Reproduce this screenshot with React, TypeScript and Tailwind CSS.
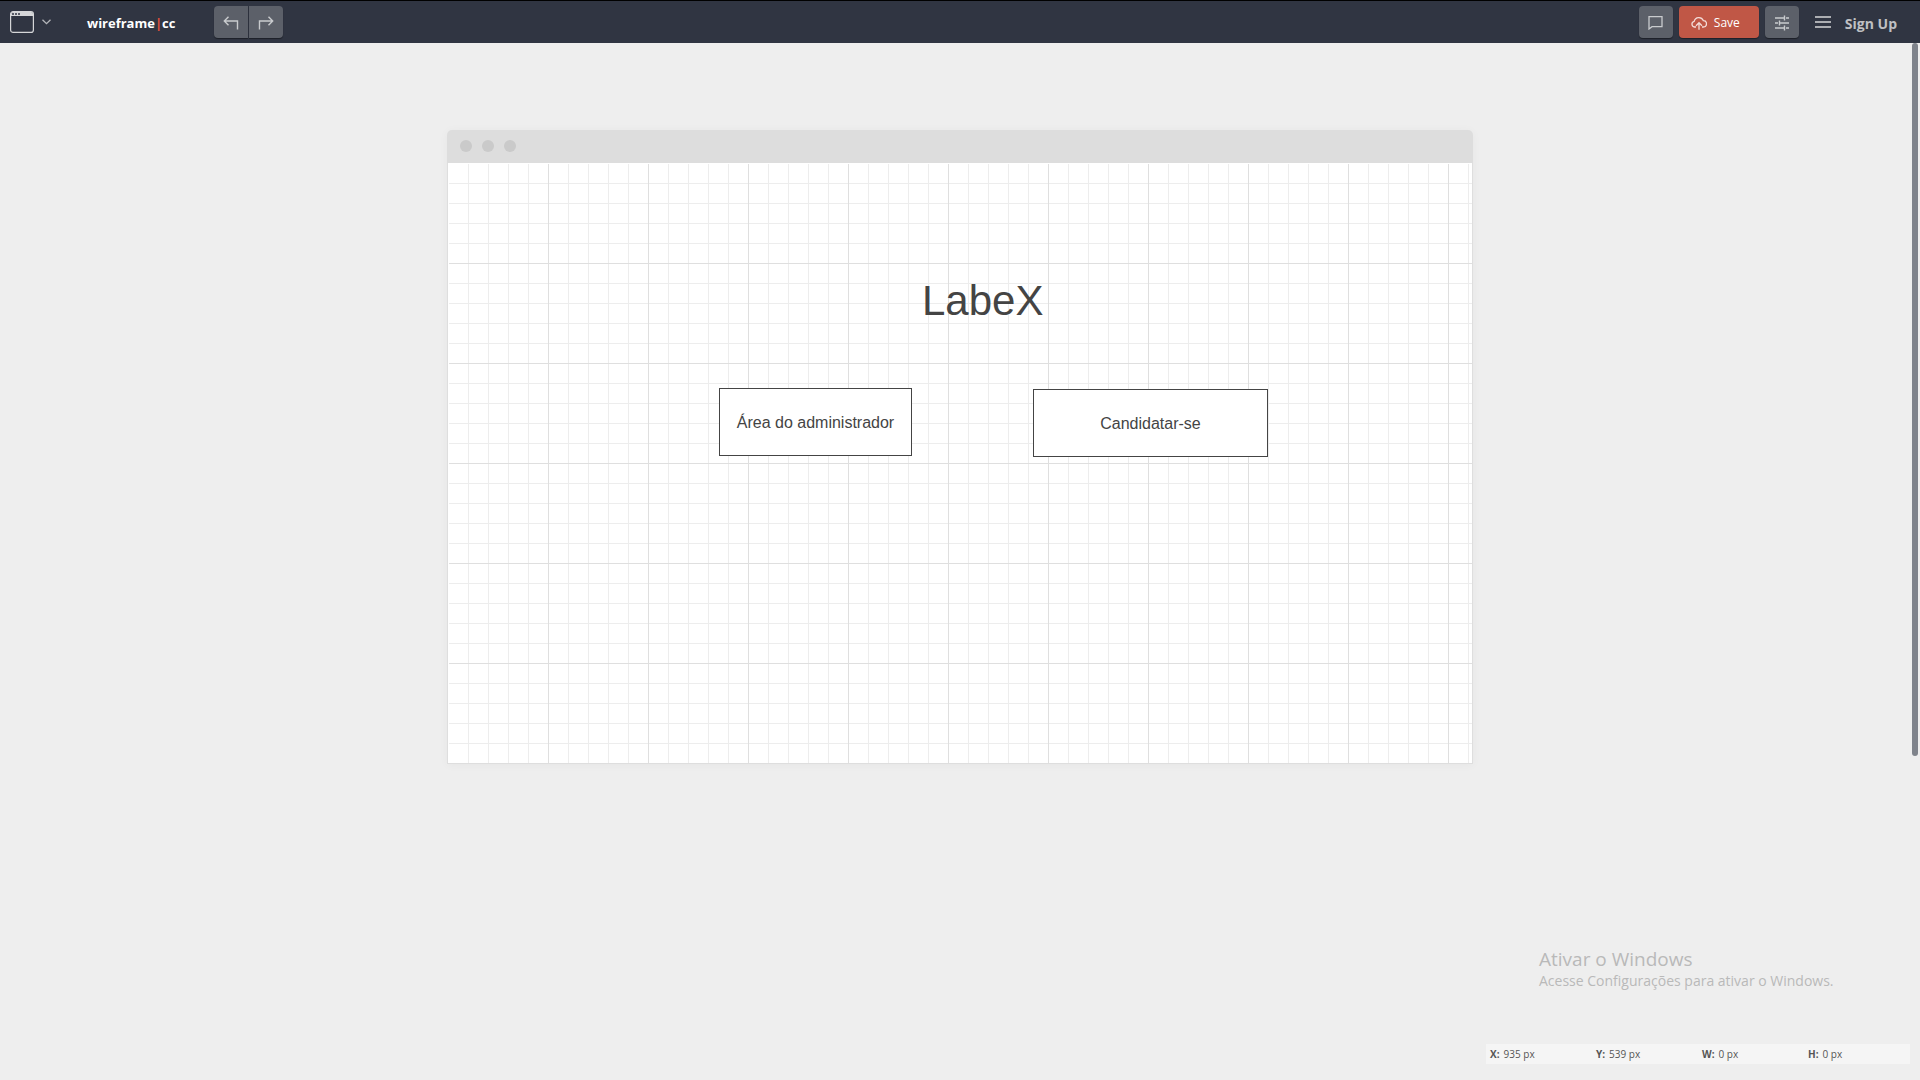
import React from "react";

const SANS = "font-['Open_Sans','Noto_Sans',sans-serif]";

const toolButton =
  "flex h-8 w-[34px] items-center justify-center bg-[#5c6069] pt-0.5 text-[#c9cbce] shadow-[0_1px_1px_rgba(0,0,0,0.4)]";

function WindowIcon() {
  return (
    <svg width="24" height="22" viewBox="0 0 24 22" fill="none" aria-hidden="true">
      <rect x="0.6" y="0.6" width="22.8" height="20.8" rx="2.5" stroke="#d5d6d8" strokeWidth="1.2" />
      <path d="M1 3a2 2 0 0 1 2-2h18a2 2 0 0 1 2 2v2H1z" fill="#d5d6d8" />
      <path d="M2 3h2M5 3h2M8 3h2" stroke="#303542" strokeWidth="1.3" />
    </svg>
  );
}

function ArrowIcon({ flip = false }: { flip?: boolean }) {
  return (
    <svg
      width="16"
      height="14"
      viewBox="0 0 16 14"
      fill="none"
      stroke="currentColor"
      strokeWidth="1.4"
      className={flip ? "-scale-x-100" : ""}
      aria-hidden="true"
    >
      <path d="M5.500 0.700 1.300 5l4.200 4.300M1.300 5h13.200v8.500" />
    </svg>
  );
}

function TopBar() {
  return (
    <header className="flex h-[43px] items-center border-t border-black bg-[#303542] pr-[23px] pl-2.5">
      <button aria-label="Wireframe type" className="flex items-center gap-2">
        <WindowIcon />
        <svg width="9" height="6" viewBox="0 0 9 6" fill="none" stroke="#b4b6ba" strokeWidth="1.3" aria-hidden="true">
          <path d="M0.500 0.700l4 4 4-4" />
        </svg>
      </button>
      <a href="#" className="ml-9 pt-[3px] text-[13px] font-bold text-white">
        wireframe<span className="text-[#e8503a]">|</span>cc
      </a>
      <div className="ml-[39px] flex gap-px">
        <button aria-label="Undo" className={`${toolButton} rounded-l-[4px]`}>
          <ArrowIcon />
        </button>
        <button aria-label="Redo" className={`${toolButton} rounded-r-[4px]`}>
          <ArrowIcon flip />
        </button>
      </div>
      <div className="ml-auto flex items-center gap-1.5">
        <button aria-label="Comments" className={`${toolButton} rounded-[4px]`}>
          <svg
            width="15"
            height="14"
            viewBox="0 0 15 14"
            fill="none"
            stroke="currentColor"
            strokeWidth="1.3"
            aria-hidden="true"
          >
            <path d="M1 0.700h13v10H4L1 13z" />
          </svg>
        </button>
        <button className="flex h-8 w-20 items-center gap-[7px] rounded-[4px] bg-[#c05746] pt-0.5 pl-3 text-xs text-white shadow-[0_1px_1px_rgba(0,0,0,0.4)]">
          <svg
            width="16"
            height="14"
            viewBox="0 0 16 14"
            fill="none"
            stroke="#f3dcd8"
            strokeWidth="1.3"
            aria-hidden="true"
          >
            <path d="M5 11H3.500a2.900 2.900 0 0 1-.3-5.700A4.800 4.800 0 0 1 12.300 4.600a3.200 3.200 0 0 1 0 6.400H11" />
            <path d="M8 13.700V6.700M5 9.700l3-3 3 3" />
          </svg>
          Save
        </button>
        <button aria-label="Settings" className={`${toolButton} rounded-[4px]`}>
          <svg
            width="14"
            height="16"
            viewBox="0 0 14 16"
            fill="none"
            stroke="currentColor"
            strokeWidth="1.4"
            aria-hidden="true"
          >
            <path d="M0 3h9.500M9.500 0.500v5M11 3h3M0 8h3M4.500 5.500v5M4.500 8H14M0 13h9.500M9.500 10.500v5M11 13h3" />
          </svg>
        </button>
        <button aria-label="Menu" className="ml-2.5 text-[#d5d6d8]">
          <svg width="16" height="12" viewBox="0 0 16 12" stroke="currentColor" strokeWidth="1.3" aria-hidden="true">
            <path d="M0 1h16M0 6h16M0 11h16" />
          </svg>
        </button>
        <a href="#" className="ml-2 pt-[3px] text-sm font-bold text-[#bfc0c3]">
          Sign Up
        </a>
      </div>
    </header>
  );
}

function Canvas() {
  return (
    <section className="mx-auto mt-[87px] w-[1026px] rounded-t-[5px] shadow-[0_1px_10px_rgba(0,0,0,0.04)]">
      <div className="flex h-[33px] items-center gap-2.5 rounded-t-[5px] bg-[#dddddd] px-[13px] pb-px">
        <span className="size-3 rounded-full bg-[#cacaca]" />
        <span className="size-3 rounded-full bg-[#cacaca]" />
        <span className="size-3 rounded-full bg-[#cacaca]" />
      </div>
      <div className="border-x border-b border-[#dedede] bg-white pt-px pl-px">
        <div className="relative h-[599px] bg-[linear-gradient(to_right,transparent_99px,#dfdfdf_99px),linear-gradient(to_bottom,transparent_99px,#dfdfdf_99px),linear-gradient(to_right,transparent_19px,#ededed_19px),linear-gradient(to_bottom,transparent_19px,#ededed_19px)] bg-[length:100px_100px,100px_100px,20px_20px,20px_20px] font-['Liberation_Sans',Arial,sans-serif] text-[#444]">
          <h1 className="absolute top-[111px] left-[473px] text-[42px] leading-[52px]">LabeX</h1>
          <button className="absolute top-[224px] left-[270px] h-[68px] w-[193px] border border-[#444] bg-white pt-0.5 text-base">
            Área do administrador
          </button>
          <button className="absolute top-[225px] left-[584px] h-[68px] w-[235px] border border-[#444] bg-white pt-0.5 text-base">
            Candidatar-se
          </button>
        </div>
      </div>
    </section>
  );
}

const readings = [
  ["X", "935 px"],
  ["Y", "539 px"],
  ["W", "0 px"],
  ["H", "0 px"],
];

export default function App() {
  return (
    <div className={`relative flex min-h-screen flex-col bg-[#eeeeee] ${SANS}`}>
      <TopBar />
      <Canvas />
      <div className="absolute top-[43px] right-0.5 h-[713px] w-1.5 rounded-full bg-[#7f838b]" />
      <footer className="mt-auto flex flex-col items-end pr-2.5 pb-4">
        <div className="mb-[53px] w-[371px] text-[#b9b9b9]">
          <p className="text-[19px] leading-6">Ativar o Windows</p>
          <p className="text-sm leading-5 whitespace-nowrap">Acesse Configurações para ativar o Windows.</p>
        </div>
        <dl className="grid h-5 w-[424px] grid-cols-4 items-center bg-[#f5f5f5] text-[10px] text-[#555]">
          {readings.map(([label, value]) => (
            <div key={label} className="flex gap-1 pl-1">
              <dt className="font-bold">{label}:</dt>
              <dd>{value}</dd>
            </div>
          ))}
        </dl>
      </footer>
    </div>
  );
}
